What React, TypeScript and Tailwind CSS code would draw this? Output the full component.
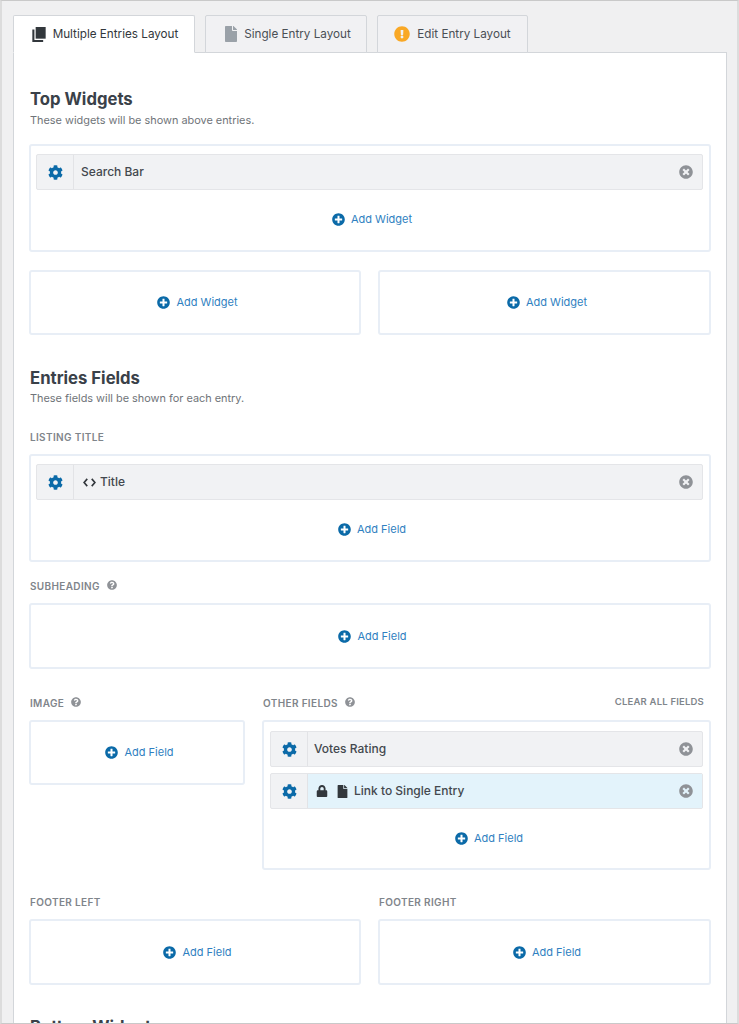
import { FaCog, FaExclamationCircle, FaFile, FaLock, FaPlusCircle, FaQuestionCircle, FaTimesCircle } from "react-icons/fa";
import type { ReactNode } from "react";

const PagesIcon = () => (
  <svg viewBox="0 0 16 18" className="h-[15px] w-[14px] text-[#32373c]" fill="currentColor">
    <path d="M4 0h12v14H4z" />
    <path d="M0 3h2.500v12.500H13V18H0z" />
  </svg>
);

const CodeIcon = () => (
  <svg viewBox="0 0 14 10" className="h-[9px] w-[13px] text-[#32373c]" fill="none" stroke="currentColor" strokeWidth="1.800">
    <path d="M4.500 1 1 5l3.500 4M9.500 1 13 5 9.500 9" />
  </svg>
);

const Add = ({ label }: { label: string }) => (
  <button className="flex items-center gap-[6px] pl-[5px] text-[11px] leading-none text-[#2f7fc1]">
    <FaPlusCircle className="text-[13px] text-[#0b6aa8]" />
    {label}
  </button>
);

const Row = ({ children, active }: { children: ReactNode; active?: boolean }) => (
  <div className="flex h-[36px] items-stretch rounded-[2px] border border-[#e4e5e8] bg-[#f1f2f4]">
    <div className="flex w-[37px] shrink-0 items-center justify-center border-r border-[#e2e3e6]">
      <FaCog className="text-[15px] text-[#0b6aa8]" />
    </div>
    <div className={`flex flex-1 items-center justify-between pl-[7px] pr-[9px] ${active ? "bg-[#e3f3fb]" : ""}`}>
      <div className="flex items-center text-[12px] font-medium text-[#43484e]">{children}</div>
      <FaTimesCircle className="text-[14px] text-[#8f9297]" />
    </div>
  </div>
);

const Box = ({ children, className = "" }: { children: ReactNode; className?: string }) => (
  <div className={`rounded-[3px] border-2 border-[#e8eef6] bg-white ${className}`}>{children}</div>
);

const EmptyBox = ({ label, tall }: { label: string; tall?: boolean }) => (
  <Box className={`flex items-center justify-center ${tall ? "h-[66px]" : "h-[65px]"}`}>
    <Add label={label} />
  </Box>
);

const Label = ({ children, help }: { children: string; help?: boolean }) => (
  <div className="ml-px flex h-[14px] items-center gap-[7px] text-[10px] font-semibold uppercase leading-none tracking-[0.35px] text-[#7f858b]">
    {children}
    {help && <FaQuestionCircle className="mb-[3px] text-[10px] text-[#8f9297]" />}
  </div>
);

const Tab = ({ icon, label, active, className }: { icon: ReactNode; label: string; active?: boolean; className: string }) => (
  <div
    className={`-mb-px flex h-[38px] items-center justify-center gap-[7px] rounded-t-[2px] border border-[#d3d6da] text-[11.700px] text-[#4a4f55] ${
      active ? "border-b-white bg-white text-[#32373c]" : "bg-[#f1f1f3]"
    } ${className}`}
  >
    {icon}
    <span className="pt-px">{label}</span>
  </div>
);

export default function App() {
  return (
    <div
      className="h-[1024px] w-[739px] overflow-hidden border-x-2 border-y border-x-[#dcdcdc] border-y-[#c9c9c9] bg-[#f0f0f1] pl-[11px] pr-[10px] pt-[14px]"
      style={{ fontFamily: '"Inter", "Liberation Sans", sans-serif' }}
    >
      <div className="relative z-10 flex gap-[10px]">
        <Tab active className="w-[182px] pl-[2px]" label="Multiple Entries Layout" icon={<PagesIcon />} />
        <Tab className="w-[162px]" label="Single Entry Layout" icon={<FaFile className="-mr-[2px] ml-[2px] text-[16px] text-[#9aa1a8]" />} />
        <Tab className="w-[151px]" label="Edit Entry Layout" icon={<FaExclamationCircle className="text-[16px] text-[#f9a825]" />} />
      </div>

      <div className="border border-[#d3d6da] bg-white px-[15px] pt-[36px]">
        <h2 className="ml-px text-[16.700px] font-bold leading-[20px] text-[#3a4149]">Top Widgets</h2>
        <p className="ml-px mt-[4px] text-[10.900px] leading-[14px] text-[#6f7479]">These widgets will be shown above entries.</p>

        <Box className="mt-[17px] h-[108px] pl-[5px] pr-[6px] pt-[8px]">
          <Row>Search Bar</Row>
          <div className="mt-[23px] flex justify-center">
            <Add label="Add Widget" />
          </div>
        </Box>

        <div className="mt-[18px] grid grid-cols-[332px_333px] gap-[17px]">
          <EmptyBox label="Add Widget" />
          <EmptyBox label="Add Widget" />
        </div>

        <h2 className="ml-px mt-[33px] text-[16.700px] font-bold leading-[20px] text-[#3a4149]">Entries Fields</h2>
        <p className="ml-px mt-[3px] text-[10.900px] leading-[14px] text-[#6f7479]">These fields will be shown for each entry.</p>

        <div className="mt-[25px]">
          <Label>Listing Title</Label>
        </div>
        <Box className="mt-[10px] h-[108px] pl-[5px] pr-[6px] pt-[8px]">
          <Row>
            <span className="ml-[2px] mr-[4px]">
              <CodeIcon />
            </span>
            Title
          </Row>
          <div className="mt-[23px] flex justify-center">
            <Add label="Add Field" />
          </div>
        </Box>

        <div className="mt-[17px]">
          <Label help>Subheading</Label>
        </div>
        <div className="mt-[10px]">
          <EmptyBox tall label="Add Field" />
        </div>

        <div className="mt-[27px] flex gap-[17px]">
          <div className="w-[216px] shrink-0">
            <Label help>Image</Label>
            <div className="mt-[10px]">
              <EmptyBox label="Add Field" />
            </div>
          </div>
          <div className="flex-1">
            <div className="flex h-[14px] items-center justify-between pr-[7px]">
              <Label help>Other Fields</Label>
              <span className="mb-[2px] text-[9.500px] font-semibold uppercase leading-none tracking-[0.2px] text-[#7f858b]">Clear All Fields</span>
            </div>
            <Box className="mt-[10px] h-[150px] px-[6px] pt-[9px]">
              <Row>
                <span className="-ml-px">Votes Rating</span>
              </Row>
              <div className="mt-[6px]">
                <Row active>
                  <FaLock className="ml-px text-[12px] text-[#32373c]" />
                  <FaFile className="ml-[8px] mr-[5px] text-[13px] text-[#32373c]" />
                  Link to Single Entry
                </Row>
              </div>
              <div className="mt-[23px] flex justify-center">
                <Add label="Add Field" />
              </div>
            </Box>
          </div>
        </div>

        <div className="mt-[25px] grid grid-cols-[332px_333px] gap-[17px]">
          <div>
            <Label>Footer Left</Label>
            <div className="mt-[10px]">
              <EmptyBox tall label="Add Field" />
            </div>
          </div>
          <div>
            <Label>Footer Right</Label>
            <div className="mt-[10px]">
              <EmptyBox tall label="Add Field" />
            </div>
          </div>
        </div>

        <h2 className="ml-px mt-[32px] text-[16.700px] font-bold leading-[20px] text-[#3a4149]">Bottom Widgets</h2>
      </div>
    </div>
  );
}
